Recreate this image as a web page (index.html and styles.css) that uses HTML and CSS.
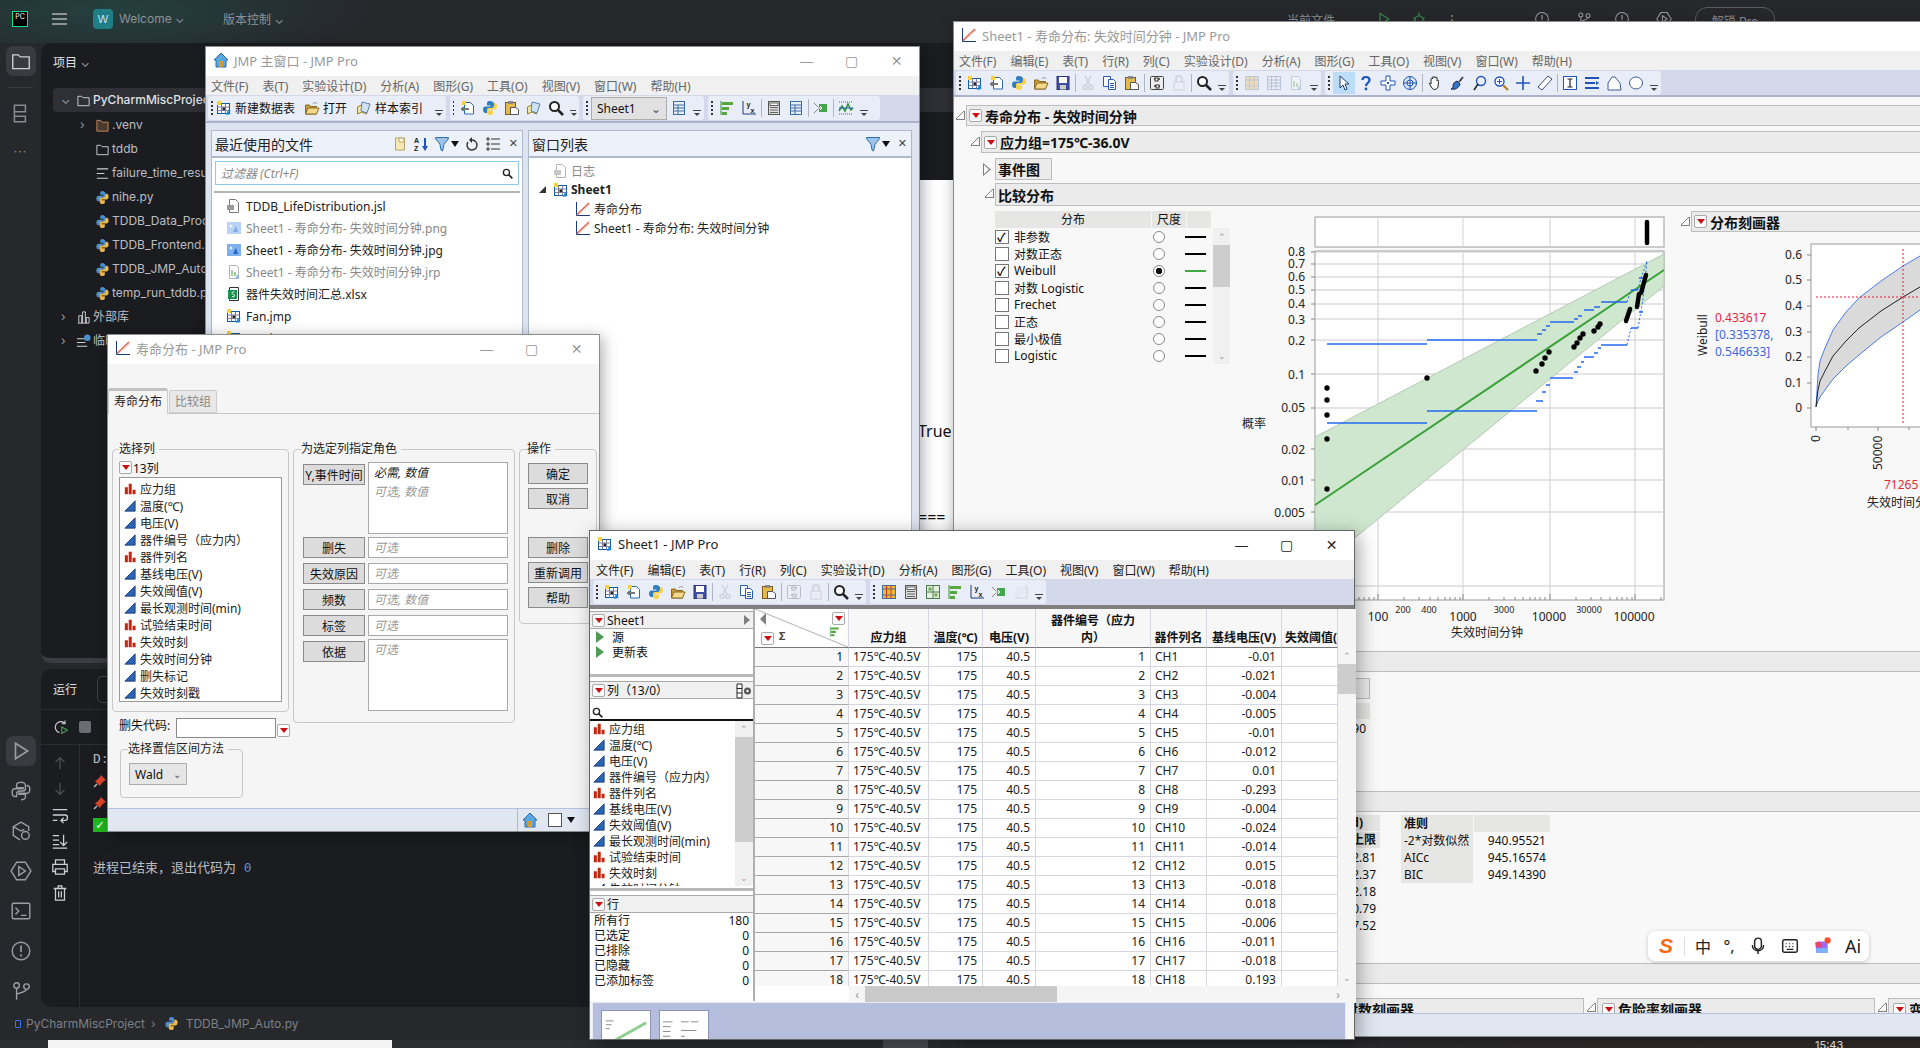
FILE: index.html
```html
<!DOCTYPE html>
<html lang="zh-CN">
  <head>
    <meta charset="UTF-8" />
    <title>JMP Pro</title>
    <link rel="stylesheet" href="styles.css">
  </head>
  <body>
    <svg class="sprite" xmlns="http://www.w3.org/2000/svg">
      <symbol id="i-table" viewBox="0 0 16 16"><rect x="1.5" y="3.5" width="12" height="10" fill="#fff" stroke="#0b5aa8"/><path d="M1.5 7h12M1.5 10.5h12M5.5 3.5v10M9.5 3.5v10" stroke="#7d7f9f" fill="none"/><rect x="1" y="1" width="4" height="4" fill="#f6d33c"/><rect x="6.5" y="7.5" width="2.5" height="2.5" fill="#222"/><path d="M10 15l5-1-2-1 2-3-2 1-1-1z" fill="#1e8ad6"/></symbol>
      <symbol id="i-script" viewBox="0 0 16 16"><path d="M4.500 2.500h6l3 3v8.500h-9z" fill="#fff" stroke="#2b6ca8"/><rect x="2" y="1" width="4" height="4" fill="#f6d33c"/><path d="M1 9h8M3 7v4" stroke="#777" stroke-width="2" fill="none"/></symbol>
      <symbol id="i-py" viewBox="0 0 16 16"><path d="M8 1C5 1 5 2.500 5 4v1.500h3.500V6.500H3.500C2 6.500 1 7.500 1 9.500s1 3.500 2.500 3.500H5V11c0-1.500 1-2.500 2.500-2.500h3C12 8.500 12 7.500 12 6.500V4c0-2-2-3-4-3z" fill="#2f7ec0"/><path d="M8 15c3 0 3-1.500 3-3v-1.500H7.500V9.500h5c1.500 0 2.500-1 2.500-3s-1-3.500-2.500-3.500H12v2c0 1.500-1 3-2.500 3h-3C5 8.500 5 9.500 5 10.500V12c0 2 1 3 3 3z" fill="#f7d24a"/></symbol>
      <symbol id="i-open" viewBox="0 0 16 16"><path d="M1.500 5h4l1 1.500h6V14h-11z" fill="#c99a3e" stroke="#8a6a24"/><path d="M1.500 14l2.500-6h11l-2.500 6z" fill="#f4d98a" stroke="#8a6a24"/><path d="M9 4c1-2 3-2 4 0" fill="none" stroke="#888"/></symbol>
      <symbol id="i-save" viewBox="0 0 16 16"><rect x="2" y="1.500" width="12" height="13" fill="#3f4fa6" stroke="#2b3678"/><rect x="4" y="2" width="8" height="6" fill="#fff"/><rect x="5" y="10" width="6" height="4.500" fill="#ccc"/></symbol>
      <symbol id="i-cut" viewBox="0 0 16 16"><path d="M5 1l5 9M11 1L6 10" stroke="#889" stroke-width="1.500" fill="none"/><circle cx="5" cy="12.500" r="2" fill="none" stroke="#889" stroke-width="1.500"/><circle cx="11" cy="12.500" r="2" fill="none" stroke="#889" stroke-width="1.500"/></symbol>
      <symbol id="i-copy" viewBox="0 0 16 16"><path d="M1.500 1.500h7v10h-7z" fill="#fff" stroke="#2d5fa8"/><path d="M6.500 4.500h5l2 2v8h-7z" fill="#fff" stroke="#2d5fa8"/><path d="M8 8.500h4M8 10.500h4M8 12.500h4" stroke="#2d5fa8"/></symbol>
      <symbol id="i-paste" viewBox="0 0 16 16"><rect x="1.500" y="2.500" width="10" height="12" fill="#e5b94a" stroke="#7e5d1a"/><rect x="4" y="1" width="5" height="3" fill="#888"/><path d="M6.500 7.500h5l3 2v5h-8z" fill="#fff" stroke="#555"/></symbol>
      <symbol id="i-cols" viewBox="0 0 16 16"><rect x="1.500" y="1.500" width="13" height="13" rx="1" fill="#eee" stroke="#444"/><path d="M5 4h6M5 11h6" stroke="#333" stroke-width="1.500"/><rect x="6" y="3" width="3" height="3" fill="#fff" stroke="#333"/><rect x="7" y="10" width="3" height="3" fill="#fff" stroke="#333"/></symbol>
      <symbol id="i-lock" viewBox="0 0 16 16"><rect x="3" y="7" width="10" height="8" fill="#f3f3f3" stroke="#888"/><path d="M5 7V4a3 3 0 0 1 6 0v3" fill="none" stroke="#888" stroke-width="1.500"/></symbol>
      <symbol id="i-find" viewBox="0 0 16 16"><circle cx="6.500" cy="6.500" r="4.500" fill="#fff" stroke="#222" stroke-width="2"/><path d="M10 10l5 5" stroke="#222" stroke-width="2.500"/></symbol>
      <symbol id="i-idx" viewBox="0 0 16 16"><path d="M1.500 7l4-2 5 2v7l-5-2-4 2z" fill="#f7e8a4" stroke="#9a7b2d"/><path d="M6 2l8 2-3 9-6-2z" fill="#cfe2f5" stroke="#5d83ad"/></symbol>
      <symbol id="i-xtab" viewBox="0 0 16 16"><rect x="1.500" y="1.500" width="13" height="13" fill="#eee" stroke="#3b5b8c"/><path d="M1.500 5h13M1.500 8h13M1.500 11h13M5.500 1.500v13M10 1.500v13" stroke="#3b5b8c" fill="none"/></symbol>
      <symbol id="i-fit" viewBox="0 0 16 16"><path d="M2 1v13h13" fill="none" stroke="#1c3a78"/><text x="5.500" y="6.500" class="mini-sym">y</text><text x="9.500" y="12.500" class="mini-sym">x</text></symbol>
      <symbol id="i-bars" viewBox="0 0 16 16"><path d="M2 1v14" stroke="#2f8f3a"/><path d="M3 2h11v3H3zM3 7h7v3H3zM3 12h5v3H3z" fill="#57a640"/></symbol>
      <symbol id="i-calc" viewBox="0 0 16 16"><rect x="2.500" y="1.500" width="11" height="13" fill="#ddd" stroke="#555"/><rect x="4" y="3" width="8" height="2.500" fill="#fff" stroke="#666"/><path d="M4 7.500h8M4 10h8M4 12.500h8" stroke="#666"/></symbol>
      <symbol id="i-tabul" viewBox="0 0 16 16"><rect x="2.500" y="1.500" width="11" height="13" fill="#e8eef7" stroke="#3b6ea8"/><path d="M2.500 5h11M2.500 8h11M2.500 11h11M7 5v9" stroke="#3b6ea8"/></symbol>
      <symbol id="i-move" viewBox="0 0 16 16"><path d="M1 3l5 5-5 5" fill="none" stroke="#7a8a7a"/><path d="M6 4h8v8H6z" fill="#43a54b"/><path d="M3 8h6M7 6l2 2-2 2" stroke="#fff" fill="none"/></symbol>
      <symbol id="i-wave" viewBox="0 0 16 16"><path d="M1 2h14M1 14h14" stroke="#d33" stroke-dasharray="1 1"/><path d="M1 11l3-5 3 5 3-7 3 6 2-2" fill="none" stroke="#2f8f3a" stroke-width="1.500"/><path d="M1 8h14" stroke="#2462b8"/></symbol>
      <symbol id="i-build" viewBox="0 0 16 16"><path d="M2 14L14 2M2 14h12V2" fill="none" stroke="#8a8"/><rect x="3" y="3" width="7" height="7" fill="#dde"/></symbol>
      <symbol id="i-tbl2" viewBox="0 0 16 16"><rect x="1.500" y="1.500" width="13" height="13" fill="#f1b92f" stroke="#3b6ea8"/><path d="M1.500 5h13M1.500 11h13" stroke="#3b6ea8"/><path d="M5.500 1.500v13M10 1.500v13" stroke="#c33"/></symbol>
      <symbol id="i-tbl3" viewBox="0 0 16 16"><rect x="1.500" y="1.500" width="13" height="13" fill="#e5f0e3" stroke="#4d7a4d"/><path d="M8 1.500v13M1.500 8h13" stroke="#4d7a4d"/><rect x="3.500" y="3.500" width="3" height="3" fill="#6aa84f"/><rect x="9.500" y="9.500" width="3" height="3" fill="#6aa84f"/></symbol>
      <symbol id="i-cursor" viewBox="0 0 16 16"><path d="M4 1v12l3-3 2 5 2-1-2-5h4z" fill="#fff" stroke="#1c3a78"/></symbol>
      <symbol id="i-help" viewBox="0 0 16 16"><path d="M4.500 5c0-4 7-4 7 0 0 3-3.500 3-3.500 6" fill="none" stroke="#1f55b8" stroke-width="2.200"/><circle cx="8" cy="14" r="1.400" fill="#1f55b8"/></symbol>
      <symbol id="i-cross" viewBox="0 0 16 16"><path d="M6 1h4v5h5v4h-5v5H6v-5H1V6h5z" fill="#fff" stroke="#1f55b8"/><rect x="7" y="7" width="2" height="2" fill="#1f55b8"/></symbol>
      <symbol id="i-target" viewBox="0 0 16 16"><circle cx="8" cy="8" r="6.500" fill="#d5e4f7" stroke="#1f55b8"/><circle cx="8" cy="8" r="3" fill="#fff" stroke="#1f55b8"/><path d="M8 1v14M1 8h14" stroke="#1f55b8"/></symbol>
      <symbol id="i-hand" viewBox="0 0 16 16"><path d="M4 9V4c0-1 1.500-1 1.500 0V2.500c0-1 1.500-1 1.500 0 0-1 1.500-1 1.500 0V3c0-1 1.500-1 1.500 0v3c.5-1 2-1 1.500.5L11 12c-1 3-5 3-6 1L2.500 9c-.5-1 1-1.500 1.500 0z" fill="#fff" stroke="#222"/></symbol>
      <symbol id="i-brush" viewBox="0 0 16 16"><path d="M8 6l3 3c-1 4-5 6-9 5 2-1 2-2 2-3 0-3 2-4 4-5z" fill="#3475c8" stroke="#224"/><path d="M10 7l4-5" stroke="#444" stroke-width="2"/></symbol>
      <symbol id="i-lasso" viewBox="0 0 16 16"><circle cx="10" cy="6" r="4.500" fill="none" stroke="#1f55b8" stroke-width="1.400"/><path d="M7 9l-4 6" stroke="#222" stroke-width="1.500"/></symbol>
      <symbol id="i-zoom" viewBox="0 0 16 16"><circle cx="6.500" cy="6.500" r="4.500" fill="#fff" stroke="#1f55b8" stroke-width="1.400"/><path d="M6.500 4v5M4 6.500h5" stroke="#1f55b8"/><path d="M10 10l5 5" stroke="#b0802a" stroke-width="2.200"/></symbol>
      <symbol id="i-plus" viewBox="0 0 16 16"><path d="M8 1v14M1 8h14" stroke="#1f55b8" stroke-width="1.600"/></symbol>
      <symbol id="i-ruler" viewBox="0 0 16 16"><path d="M11 1l4 3-10 11-4-3z" fill="#fff" stroke="#3a4f7a"/></symbol>
      <symbol id="i-ibox" viewBox="0 0 16 16"><rect x="1.500" y="1.500" width="13" height="13" fill="#fff" stroke="#1f55b8"/><path d="M5.500 4h5M8 4v8M5.500 12h5" stroke="#222" stroke-width="1.200"/></symbol>
      <symbol id="i-rows" viewBox="0 0 16 16"><path d="M1 3h14M1 8h10M1 13h14" stroke="#1f55b8" stroke-width="2"/><path d="M12 6l3 2-3 2z" fill="#1f55b8"/></symbol>
      <symbol id="i-poly" viewBox="0 0 16 16"><path d="M2 15V8l4-6h3l5 6 1 7z" fill="#fff" stroke="#3a5f9a"/></symbol>
      <symbol id="i-oval" viewBox="0 0 16 16"><ellipse cx="8" cy="8" rx="6.500" ry="6" fill="#fff" stroke="#3a5f9a"/></symbol>
      <symbol id="i-nom" viewBox="0 0 14 14"><path d="M1 5h3.500v8H1zM5.500 1H9v12H5.500zM10 8h3.500v5H10z" fill="#c8250c"/></symbol>
      <symbol id="i-cont" viewBox="0 0 14 14"><path d="M13 1v12H1z" fill="#2d64b4" stroke="#173a7c"/></symbol>
      <symbol id="i-home" viewBox="0 0 16 16"><path d="M8 1L1 8h2v7h10V8h2z" fill="#5aa7e0" stroke="#2a6ca8"/><rect x="6" y="9" width="4" height="6" fill="#d69a2d"/></symbol>
      <symbol id="i-funnel" viewBox="0 0 16 16"><path d="M1.500 1.500h13c0 3-4 5-4.500 7L8.500 15 7 14l-1-5.500c-.5-2-4.500-4-4.500-7z" fill="#9bc4e8" stroke="#2b6ca8"/></symbol>
      <symbol id="i-doc" viewBox="0 0 16 16"><path d="M3.500 1.500h6l3 3v10h-9z" fill="#fff" stroke="#777"/><path d="M1 7h7v5H1z" fill="#999"/></symbol>
      <symbol id="i-pic" viewBox="0 0 16 16"><rect x="1" y="2" width="14" height="12" fill="#7fb0ee"/><path d="M7 12l3-6 2 6z" fill="#1b66c9"/><circle cx="5" cy="6" r="1.500" fill="#dfeeff"/></symbol>
      <symbol id="i-jrp" viewBox="0 0 16 16"><path d="M3.500 1.500h7l2 2v11h-9z" fill="#fff" stroke="#777"/><path d="M5 6h2v6H5zM8 8h2v4H8z" fill="#57a640"/><path d="M9 15l5-1-2-1 1-3-2 1z" fill="#1e8ad6"/></symbol>
      <symbol id="i-xlsx" viewBox="0 0 16 16"><path d="M3.500 1.500h9v13h-9z" fill="#fff" stroke="#333"/><rect x="2" y="4" width="9" height="9" fill="#13934b"/><path d="M8.500 6c-3-1-3 2-1 2.500s1.500 3-1.500 2" fill="none" stroke="#fff"/></symbol>
      <symbol id="i-report" viewBox="0 0 16 16"><path d="M1.500 1v13.500H15" fill="none" stroke="#1c3a78"/><path d="M2 13.500L14 2" stroke="#e06a55" stroke-width="1.600"/><path d="M3 14L15 3" stroke="#f3bdb0"/></symbol>
      <symbol id="i-filter-f" viewBox="0 0 16 16"><path d="M3.500 2h9v12h-9z" fill="#f7e8b4" stroke="#b9a36e"/><path d="M7 2h5v4H7z" fill="#fff8dc" stroke="#b9a36e"/></symbol>
      <symbol id="i-sort" viewBox="0 0 16 16"><text x="1" y="7" class="mini-sym">A</text><text x="1" y="15" class="mini-sym">Z</text><path d="M12 2v10" stroke="#1f55b8" stroke-width="2"/><path d="M9 10l3 5 3-5z" fill="#1f55b8"/></symbol>
      <symbol id="i-redo" viewBox="0 0 16 16"><path d="M8 4a5 5 0 1 1-4 2" fill="none" stroke="#333" stroke-width="1.400"/><path d="M8 1v6L5 4z" fill="#333"/></symbol>
      <symbol id="i-listv" viewBox="0 0 16 16"><path d="M6 3h9M6 8h9M6 13h9" stroke="#333" stroke-width="1.200"/><path d="M2 2h2v2H2zM2 7h2v2H2zM2 12h2v2H2z" fill="#fff" stroke="#333"/></symbol>
      <symbol id="i-colset" viewBox="0 0 16 16"><path d="M1 1h5v14H1z" fill="#fff" stroke="#222"/><path d="M1 5.500h5M1 10h5" stroke="#222"/><circle cx="11.500" cy="8" r="3.500" fill="#555"/><circle cx="11.500" cy="8" r="1.200" fill="#fff"/></symbol>

      <symbol id="d-folder" viewBox="0 0 16 16"><path d="M2 3.500h4l1.500 1.500h6.500v8.500H2z" fill="none" stroke="#ced0d6"/></symbol>
      <symbol id="d-folder-o" viewBox="0 0 16 16"><path d="M2 2.500h4l1.500 2H14v9.500H2z" fill="#4a3a2e" stroke="#c68a5c"/></symbol>
      <symbol id="d-py" viewBox="0 0 16 16"><path d="M8 1C5.500 1 5.500 2.500 5.500 4v1H9v1H3.500C2 6 1.500 7.500 1.500 9s.5 3 2 3H5v-1.500C5 9 6 8 7.500 8h2C11 8 11 7 11 6V3.500C11 2 9.500 1 8 1z" fill="#4b8fd1"/><path d="M8 15c2.500 0 2.500-1.500 2.500-3v-1H7v-1h5.500c1.500 0 2-1.500 2-3s-.5-3-2-3H11v1.500C11 7 10 8 8.500 8h-2C5 8 5 9 5 10v2.500C5 14 6.500 15 8 15z" fill="#eeb94a"/></symbol>
      <symbol id="d-text" viewBox="0 0 16 16"><path d="M2 3h12M2 8h8M2 13h12" stroke="#ced0d6" stroke-width="1.200"/></symbol>
      <symbol id="d-lib" viewBox="0 0 16 16"><path d="M2 14h12M3 14V6h3v8M7 14V2h3v12M11 14V8h3v6" fill="none" stroke="#ced0d6"/></symbol>
      <symbol id="d-temp" viewBox="0 0 16 16"><path d="M1 5h11M1 9h9M1 13h11" stroke="#ced0d6" stroke-width="1.200"/><circle cx="12" cy="4" r="3.500" fill="#4b8fd1"/></symbol>
      <symbol id="d-struct" viewBox="0 0 20 20"><path d="M4 2h10v6H4zM4 8v9h10v-5H4" fill="none" stroke="#868a91" stroke-width="1.400"/></symbol>
      <symbol id="d-run" viewBox="0 0 20 20"><path d="M5 3l11 7-11 7z" fill="none" stroke="#9a9da4" stroke-width="1.500"/></symbol>
      <symbol id="d-run-g" viewBox="0 0 20 20"><path d="M5 3l11 7-11 7z" fill="none" stroke="#3c8f4b" stroke-width="1.500"/></symbol>
      <symbol id="d-bug" viewBox="0 0 20 20"><ellipse cx="10" cy="12" rx="5" ry="6" fill="none" stroke="#3c8f4b" stroke-width="1.500"/><path d="M10 6V2M3 8l3 2M17 8l-3 2M2 13h3M15 13h3" stroke="#3c8f4b" stroke-width="1.500"/></symbol>
      <symbol id="d-rerun" viewBox="0 0 20 20"><path d="M15 5.500A7 7 0 1 0 8 17" fill="none" stroke="#ced0d6" stroke-width="1.400"/><path d="M15 2v4h-4" fill="none" stroke="#ced0d6" stroke-width="1.400"/><path d="M11 10l7 4-7 4z" fill="none" stroke="#4b9f5a" stroke-width="1.400"/></symbol>
      <symbol id="d-up" viewBox="0 0 20 20"><path d="M10 17V4M5 9l5-5 5 5" fill="none" stroke="#4f5256" stroke-width="1.400"/></symbol>
      <symbol id="d-down" viewBox="0 0 20 20"><path d="M10 3v13M5 11l5 5 5-5" fill="none" stroke="#4f5256" stroke-width="1.400"/></symbol>
      <symbol id="d-wrap" viewBox="0 0 20 20"><path d="M2 4h16M2 10h14c3 0 3 6 0 6h-4M14 13l-3 3 3 3M2 16h5" fill="none" stroke="#ced0d6" stroke-width="1.400"/></symbol>
      <symbol id="d-end" viewBox="0 0 20 20"><path d="M2 4h7M2 9h7M2 14h7M14 3v12M10 11l4 4 4-4M2 18h16" fill="none" stroke="#ced0d6" stroke-width="1.400"/></symbol>
      <symbol id="d-print" viewBox="0 0 20 20"><path d="M5 7V2h10v5M5 15H2V7h16v8h-3M5 12h10v6H5z" fill="none" stroke="#ced0d6" stroke-width="1.400"/></symbol>
      <symbol id="d-trash" viewBox="0 0 20 20"><path d="M3 5h14M8 5V2h4v3M5 5v13h10V5M8.500 8v7M11.500 8v7" fill="none" stroke="#ced0d6" stroke-width="1.400"/></symbol>
      <symbol id="d-pin" viewBox="0 0 14 14"><path d="M8 1l5 5-2 1-3 3-1 2-5-5 2-1 3-3z" fill="#e2452a"/><path d="M4 10l-3 3" stroke="#bbb" stroke-width="1.400"/></symbol>
      <symbol id="d-pyo" viewBox="0 0 20 20"><path d="M10 2c-5 0-4 3-4 5h6v1H4c-2 0-2 2-2 4s1 3 3 3h1v-2c0-2 1-3 3-3h3c2 0 2-1 2-2V5c0-2-2-3-4-3zM10 18c5 0 4-3 4-5H8v-1h8c2 0 2-2 2-4s-1-3-3-3" fill="none" stroke="#9a9da4" stroke-width="1.300"/></symbol>
      <symbol id="d-pkg" viewBox="0 0 20 20"><path d="M10 2l7 4v4M10 2L3 6v8l6 4M3 6l7 4 3-1.500" fill="none" stroke="#9a9da4" stroke-width="1.300"/><circle cx="14" cy="14" r="3.500" fill="none" stroke="#9a9da4" stroke-width="1.300"/></symbol>
      <symbol id="d-svc" viewBox="0 0 20 20"><path d="M6 2h8l5 8-5 8H6l-5-8z" fill="none" stroke="#9a9da4" stroke-width="1.300"/><path d="M8 6l6 4-6 4z" fill="none" stroke="#9a9da4" stroke-width="1.300"/></symbol>
      <symbol id="d-term" viewBox="0 0 20 20"><rect x="2" y="3" width="16" height="14" rx="1" fill="none" stroke="#9a9da4" stroke-width="1.300"/><path d="M5 7l3 3-3 3M10 14h5" fill="none" stroke="#9a9da4" stroke-width="1.300"/></symbol>
      <symbol id="d-warn" viewBox="0 0 20 20"><circle cx="10" cy="10" r="8" fill="none" stroke="#9a9da4" stroke-width="1.300"/><path d="M10 5v6M10 13v2" stroke="#9a9da4" stroke-width="1.500"/></symbol>
      <symbol id="d-git" viewBox="0 0 20 20"><circle cx="6" cy="5" r="2.500" fill="none" stroke="#9a9da4" stroke-width="1.300"/><circle cx="15" cy="6" r="2.500" fill="none" stroke="#9a9da4" stroke-width="1.300"/><path d="M6 7.500V18M15 8.500c0 3-9 3-9 5" fill="none" stroke="#9a9da4" stroke-width="1.300"/></symbol>
    </svg>

    <!-- PyCharm behind everything -->
    <div class="ide">
      <div class="ide-top">
        <span class="pc-logo">PC</span>
        <span class="burger"></span>
        <span class="proj-badge">W</span>
        <span class="ide-top-txt w-welcome">Welcome ⌄</span>
        <span class="ide-top-txt">版本控制 ⌄</span>
        <div class="ide-top-right">
          <span class="ide-top-txt w-file">当前文件 ⌄</span>
          <svg class="tb-ico"><use href="#d-run-g"/></svg>
          <svg class="tb-ico"><use href="#d-bug"/></svg>
          <span class="ide-top-txt w-dots">⋮</span>
          <svg class="tb-ico w-gap"><use href="#d-warn"/></svg>
          <svg class="tb-ico w-m7"><use href="#d-git"/></svg>
          <svg class="tb-ico w-m3"><use href="#d-warn"/></svg>
          <svg class="tb-ico w-m7"><use href="#d-svc"/></svg>
          <span class="unlock">解锁 Pro</span>
          <span class="os-ctl os-first">—</span>
          <span class="os-ctl">▢</span>
          <span class="os-ctl">✕</span>
        </div>
      </div>
      <div class="ide-main">
        <div class="activity">
          <div class="act-top">
            <span class="act-btn act-on"><svg class="act-ico"><use href="#d-folder"/></svg></span>
            <span class="act-rule"></span>
            <span class="act-btn"><svg class="act-ico"><use href="#d-struct"/></svg></span>
            <span class="act-more">···</span>
          </div>
          <div class="act-low">
            <span class="act-btn act-on"><svg class="act-ico"><use href="#d-run"/></svg></span>
            <span class="act-btn"><svg class="act-ico"><use href="#d-pyo"/></svg></span>
            <span class="act-btn"><svg class="act-ico"><use href="#d-pkg"/></svg></span>
            <span class="act-btn"><svg class="act-ico"><use href="#d-svc"/></svg></span>
            <span class="act-btn"><svg class="act-ico"><use href="#d-term"/></svg></span>
            <span class="act-btn"><svg class="act-ico"><use href="#d-warn"/></svg></span>
            <span class="act-btn"><svg class="act-ico"><use href="#d-git"/></svg></span>
          </div>
        </div>
        <div class="panels">
          <div class="project">
            <div class="proj-title">项目 <span class="chev">⌄</span></div>
            <ul class="tree">
              <li class="sel lv1"><span class="chev">⌄</span><svg class="tree-ico"><use href="#d-folder"/></svg><b>PyCharmMiscProject</b></li>
              <li class="lv2"><span class="chev">›</span><svg class="tree-ico"><use href="#d-folder-o"/></svg>.venv</li>
              <li class="lv2"><span class="chev"></span><svg class="tree-ico"><use href="#d-folder"/></svg>tddb</li>
              <li class="lv2"><span class="chev"></span><svg class="tree-ico"><use href="#d-text"/></svg>failure_time_results.txt</li>
              <li class="lv2"><span class="chev"></span><svg class="tree-ico"><use href="#d-py"/></svg>nihe.py</li>
              <li class="lv2"><span class="chev"></span><svg class="tree-ico"><use href="#d-py"/></svg>TDDB_Data_Processor.py</li>
              <li class="lv2"><span class="chev"></span><svg class="tree-ico"><use href="#d-py"/></svg>TDDB_Frontend.py</li>
              <li class="lv2"><span class="chev"></span><svg class="tree-ico"><use href="#d-py"/></svg>TDDB_JMP_Auto.py</li>
              <li class="lv2"><span class="chev"></span><svg class="tree-ico"><use href="#d-py"/></svg>temp_run_tddb.py</li>
              <li class="lv1"><span class="chev">›</span><svg class="tree-ico"><use href="#d-lib"/></svg>外部库</li>
              <li class="lv1"><span class="chev">›</span><svg class="tree-ico"><use href="#d-temp"/></svg>临时文件和控制台</li>
            </ul>
          </div>
          <div class="run-panel">
            <div class="run-title">运行<span class="run-tabbox"></span></div>
            <div class="run-tools"><svg class="tb-ico"><use href="#d-rerun"/></svg><span class="stop"></span></div>
            <div class="run-body">
              <div class="run-side">
                <svg class="side-ico"><use href="#d-up"/></svg>
                <svg class="side-ico"><use href="#d-down"/></svg>
                <svg class="side-ico"><use href="#d-wrap"/></svg>
                <svg class="side-ico"><use href="#d-end"/></svg>
                <svg class="side-ico"><use href="#d-print"/></svg>
                <svg class="side-ico"><use href="#d-trash"/></svg>
              </div>
              <div class="console">
                <div>D:</div>
                <div class="pin-row"><svg class="pin"><use href="#d-pin"/></svg></div>
                <div class="pin-row"><svg class="pin"><use href="#d-pin"/></svg></div>
                <div class="ok-row"><span class="ok">✓</span></div>
                <div class="exit-line">进程已结束，退出代码为 <span class="zero">0</span></div>
              </div>
            </div>
          </div>
        </div>
      </div>
      <div class="ide-status">
        <span class="crumb-box"></span>PyCharmMiscProject <span class="crumb-sep">›</span>
        <svg class="tree-ico"><use href="#d-py"/></svg>TDDB_JMP_Auto.py
      </div>
      <div class="taskbar">
        <span class="task-white"></span>
        <span class="task-lit"></span>
        <span class="task-time">15:43</span>
      </div>
    </div>

    <!-- some other window peeking between the JMP windows -->
    <div class="win back-win">
      <div class="back-true">True</div>
      <div class="back-eq">===</div>
    </div>

    <!-- JMP home window -->
    <section class="win home-win">
      <header class="win-title">
        <svg class="ico"><use href="#i-home"/></svg><span>JMP 主窗口 - JMP Pro</span>
        <div class="win-ctl"><span>—</span><span>▢</span><span>✕</span></div>
      </header>
      <nav class="menu">
        <span>文件(F)</span><span>表(T)</span><span>实验设计(D)</span><span>分析(A)</span><span>图形(G)</span><span>工具(O)</span><span>视图(V)</span><span>窗口(W)</span><span>帮助(H)</span>
      </nav>
      <div class="toolbar home-tools">
        <div class="tgroup tg-w1">
          <i class="grip"></i>
          <svg class="ico"><use href="#i-table"/></svg><span class="tb-txt">新建数据表</span>
          <svg class="ico ml"><use href="#i-open"/></svg><span class="tb-txt">打开</span>
          <svg class="ico ml"><use href="#i-idx"/></svg><span class="tb-txt">样本索引</span>
          <i class="drop"></i>
        </div>
        <div class="tgroup tg-w2">
          <i class="grip"></i>
          <svg class="ico btn"><use href="#i-script"/></svg><svg class="ico btn"><use href="#i-py"/></svg><svg class="ico btn"><use href="#i-paste"/></svg><svg class="ico btn"><use href="#i-idx"/></svg><svg class="ico btn"><use href="#i-find"/></svg>
          <i class="drop"></i>
        </div>
        <div class="tgroup tg-w3">
          <i class="grip"></i>
          <span class="tb-select">Sheet1<em>⌄</em></span>
          <svg class="ico btn"><use href="#i-tabul"/></svg>
          <i class="drop"></i>
        </div>
        <div class="tgroup tg-w4">
          <i class="grip"></i>
          <svg class="ico btn"><use href="#i-bars"/></svg><svg class="ico btn"><use href="#i-fit"/></svg><i class="sep"></i>
          <svg class="ico btn"><use href="#i-calc"/></svg><svg class="ico btn"><use href="#i-tabul"/></svg><i class="sep"></i>
          <svg class="ico btn"><use href="#i-move"/></svg><i class="sep"></i>
          <svg class="ico btn"><use href="#i-wave"/></svg>
          <i class="drop"></i>
        </div>
      </div>
      <div class="home-panes">
        <div class="pane recent-pane">
          <div class="pane-head">
            <span>最近使用的文件</span>
            <div class="pane-tools">
              <svg class="ico"><use href="#i-filter-f"/></svg><svg class="ico"><use href="#i-sort"/></svg><svg class="ico"><use href="#i-funnel"/></svg><i class="caret"></i><svg class="ico"><use href="#i-redo"/></svg><svg class="ico"><use href="#i-listv"/></svg><span class="x">✕</span>
            </div>
          </div>
          <div class="filter-box"><span>过滤器 (Ctrl+F)</span><svg class="ico-sm"><use href="#i-find"/></svg></div>
          <ul class="recent">
            <li><svg class="ico"><use href="#i-doc"/></svg>TDDB_LifeDistribution.jsl</li>
            <li class="faded"><svg class="ico"><use href="#i-pic"/></svg>Sheet1 - 寿命分布- 失效时间分钟.png</li>
            <li><svg class="ico"><use href="#i-pic"/></svg>Sheet1 - 寿命分布- 失效时间分钟.jpg</li>
            <li class="faded"><svg class="ico"><use href="#i-jrp"/></svg>Sheet1 - 寿命分布- 失效时间分钟.jrp</li>
            <li><svg class="ico"><use href="#i-xlsx"/></svg>器件失效时间汇总.xlsx</li>
            <li><svg class="ico"><use href="#i-table"/></svg>Fan.jmp</li>
            <li><svg class="ico"><use href="#i-table"/></svg>Fan.jmp</li>
          </ul>
        </div>
        <div class="pane winlist-pane">
          <div class="pane-head">
            <span>窗口列表</span>
            <div class="pane-tools"><svg class="ico"><use href="#i-funnel"/></svg><i class="caret"></i><span class="x">✕</span></div>
          </div>
          <ul class="winlist">
            <li class="wl0 faded"><svg class="ico"><use href="#i-doc"/></svg>日志</li>
            <li class="wl0 strong"><i class="tree-tri"></i><svg class="ico"><use href="#i-table"/></svg>Sheet1</li>
            <li class="wl1"><svg class="ico"><use href="#i-report"/></svg>寿命分布</li>
            <li class="wl1"><svg class="ico"><use href="#i-report"/></svg>Sheet1 - 寿命分布: 失效时间分钟</li>
          </ul>
        </div>
      </div>
    </section>

    <!-- report window -->
    <section class="win report-win">
      <header class="win-title">
        <svg class="ico"><use href="#i-report"/></svg><span>Sheet1 - 寿命分布: 失效时间分钟 - JMP Pro</span>
      </header>
      <nav class="menu report-menu">
        <span>文件(F)</span><span>编辑(E)</span><span>表(T)</span><span>行(R)</span><span>列(C)</span><span>实验设计(D)</span><span>分析(A)</span><span>图形(G)</span><span>工具(O)</span><span>视图(V)</span><span>窗口(W)</span><span>帮助(H)</span>
      </nav>
      <div class="toolbar report-tools">
        <div class="tgroup">
          <i class="grip"></i>
          <svg class="ico btn"><use href="#i-table"/></svg><svg class="ico btn"><use href="#i-script"/></svg><svg class="ico btn"><use href="#i-py"/></svg><svg class="ico btn"><use href="#i-open"/></svg><svg class="ico btn"><use href="#i-save"/></svg><i class="sep"></i>
          <svg class="ico btn dim"><use href="#i-cut"/></svg><svg class="ico btn"><use href="#i-copy"/></svg><svg class="ico btn"><use href="#i-paste"/></svg><i class="sep"></i>
          <svg class="ico btn"><use href="#i-cols"/></svg><svg class="ico btn dim"><use href="#i-lock"/></svg><i class="sep"></i>
          <svg class="ico btn"><use href="#i-find"/></svg>
          <i class="drop"></i>
        </div>
        <div class="tgroup">
          <i class="grip"></i>
          <svg class="ico btn dim"><use href="#i-tbl2"/></svg><svg class="ico btn dim"><use href="#i-xtab"/></svg><svg class="ico btn dim"><use href="#i-jrp"/></svg>
          <i class="drop"></i>
        </div>
        <div class="tgroup">
          <i class="grip"></i>
          <span class="btn-on"><svg class="ico"><use href="#i-cursor"/></svg></span><svg class="ico btn"><use href="#i-help"/></svg><svg class="ico btn"><use href="#i-cross"/></svg><svg class="ico btn"><use href="#i-target"/></svg><i class="sep"></i>
          <svg class="ico btn"><use href="#i-hand"/></svg><svg class="ico btn"><use href="#i-brush"/></svg><svg class="ico btn"><use href="#i-lasso"/></svg><svg class="ico btn"><use href="#i-zoom"/></svg><svg class="ico btn"><use href="#i-plus"/></svg><svg class="ico btn"><use href="#i-ruler"/></svg><i class="sep"></i>
          <svg class="ico btn"><use href="#i-ibox"/></svg><svg class="ico btn"><use href="#i-rows"/></svg><svg class="ico btn"><use href="#i-poly"/></svg><svg class="ico btn"><use href="#i-oval"/></svg>
          <i class="drop"></i>
        </div>
      </div>
      <div class="report-body">
        <h3 class="outline o1"><i class="disc"></i><i class="rbtn"></i>寿命分布 - 失效时间分钟</h3>
        <h3 class="outline o2"><i class="disc"></i><i class="rbtn"></i>应力组=175℃-36.0V</h3>
        <h3 class="outline o3"><i class="disc-r"></i>事件图</h3>
        <h3 class="outline o4"><i class="disc"></i>比较分布</h3>
        <div class="compare">
          <div class="dist-wrap">
            <div class="dist-table">
              <div class="dist-head"><span>分布</span><span>尺度</span><span></span></div>
              <div class="dist-row"><i class="chk on"></i><span>非参数</span><i class="radio"></i><i class="swatch"></i></div>
              <div class="dist-row"><i class="chk"></i><span>对数正态</span><i class="radio"></i><i class="swatch"></i></div>
              <div class="dist-row"><i class="chk on"></i><span>Weibull</span><i class="radio on"></i><i class="swatch green"></i></div>
              <div class="dist-row"><i class="chk"></i><span>对数 Logistic</span><i class="radio"></i><i class="swatch"></i></div>
              <div class="dist-row"><i class="chk"></i><span>Frechet</span><i class="radio"></i><i class="swatch"></i></div>
              <div class="dist-row"><i class="chk"></i><span>正态</span><i class="radio"></i><i class="swatch"></i></div>
              <div class="dist-row"><i class="chk"></i><span>最小极值</span><i class="radio"></i><i class="swatch"></i></div>
              <div class="dist-row"><i class="chk"></i><span>Logistic</span><i class="radio"></i><i class="swatch"></i></div>
            </div>
            <div class="dist-scroll"><span>⌃</span><i></i><span class="dn">⌄</span></div>
          </div>
          <div class="plots">
            <svg class="plot-svg" viewBox="1230 210 690 440">
              <!-- strip above the probability plot -->
              <rect class="plot-box" x="1314" y="218" width="349" height="30"/>
              <path class="grid-v" d="M1377 218v30M1462 218v30M1549 218v30M1634 218v30"/>
              <path class="pts-line" d="M1646 223v21"/>
              <!-- probability plot -->
              <rect class="plot-box" x="1314" y="252" width="349" height="349"/>
              <path class="grid-h" d="M1314 253h349M1314 265h349M1314 278h349M1314 291h349M1314 305h349M1314 320h349M1314 341h349M1314 375h349M1314 409h349M1314 450h349M1314 481h349M1314 513h349M1314 587h349"/>
              <path class="grid-v" d="M1377 252v349M1462 252v349M1549 252v349M1634 252v349"/>
              <path class="band-g" d="M1314 438L1663 255V287L1355 538L1314 580Z"/>
              <path class="fit-g" d="M1314 506L1663 271"/>
              <path class="step" d="M1326 345h100M1426 341h110M1536 335h5M1541 331h4M1545 327h4M1549 323h24M1573 320h4M1577 317h4M1583 311h10M1593 308h6M1600 303h26M1630 291h7M1638 279h8M1326 424h100M1426 412h110M1535 402h7M1541 393h4M1545 386h4M1549 379h23M1573 373h4M1576 368h4M1580 363h3M1583 358h10M1593 354h4M1597 349h3M1600 346h26M1630 329h7M1638 313h4"/>
              <path class="step-dot" d="M1626 346L1630 329M1637 329L1642 300L1646 262M1626 303L1630 291M1637 291L1640 279L1646 262"/>
              <g class="pts">
                <circle cx="1326" cy="389" r="2.700"/><circle cx="1326" cy="401" r="2.700"/><circle cx="1326" cy="416" r="2.700"/><circle cx="1326" cy="440" r="2.700"/><circle cx="1326" cy="490" r="2.700"/><circle cx="1426" cy="379" r="2.700"/>
                <circle cx="1535" cy="372" r="2.700"/><circle cx="1541" cy="365" r="2.700"/><circle cx="1544" cy="359" r="2.700"/><circle cx="1548" cy="353" r="2.700"/><circle cx="1573" cy="348" r="2.700"/><circle cx="1576" cy="344" r="2.700"/><circle cx="1579" cy="339" r="2.700"/><circle cx="1582" cy="335" r="2.700"/><circle cx="1593" cy="332" r="2.700"/><circle cx="1597" cy="328" r="2.700"/><circle cx="1599" cy="325" r="2.700"/>
              </g>
              <path class="pts-line" d="M1625 322L1629 310M1636 308L1638 295M1640 294L1645 276"/>
              <g class="ax ax-r">
                <text x="1304" y="257">0.8</text><text x="1304" y="269">0.7</text><text x="1304" y="282">0.6</text><text x="1304" y="295">0.5</text><text x="1304" y="309">0.4</text><text x="1304" y="325">0.3</text><text x="1304" y="346">0.2</text><text x="1304" y="380">0.1</text><text x="1304" y="413">0.05</text><text x="1304" y="455">0.02</text><text x="1304" y="486">0.01</text><text x="1304" y="518">0.005</text>
              </g>
              <text class="ax ax-m" x="1253" y="429">概率</text>
              <path class="tick" d="M1314 253h-4M1314 265h-4M1314 278h-4M1314 291h-4M1314 305h-4M1314 320h-4M1314 341h-4M1314 375h-4M1314 409h-4M1314 450h-4M1314 481h-4M1314 513h-4"/>
              <path class="tick" d="M1358 601v-3M1363 601v-3M1368 601v-3M1373 601v-3M1377 601v-6M1403 601v-3M1418 601v-3M1429 601v-3M1437 601v-3M1444 601v-3M1449 601v-3M1454 601v-3M1459 601v-3M1462 601v-6M1488 601v-3M1503 601v-3M1514 601v-3M1522 601v-3M1529 601v-3M1534 601v-3M1539 601v-3M1544 601v-3M1549 601v-6M1575 601v-3M1590 601v-3M1600 601v-3M1609 601v-3M1616 601v-3M1621 601v-3M1626 601v-3M1631 601v-3M1634 601v-6M1660 601v-3"/>
              <g class="ax ax-m">
                <text x="1377" y="622">100</text><text x="1462" y="622">1000</text><text x="1548" y="622">10000</text><text x="1633" y="622">100000</text>
                <text class="ax-sm" x="1402" y="614">200</text><text class="ax-sm" x="1428" y="614">400</text><text class="ax-sm" x="1503" y="614">3000</text><text class="ax-sm" x="1588" y="614">30000</text>
                <text x="1486" y="638">失效时间分钟</text>
              </g>
              <!-- distribution profiler -->
              <rect class="plot-box" x="1810" y="245" width="120" height="183"/>
              <path class="band-k" d="M1815 408L1817 376L1819 362L1824 349L1832 331L1845 313L1858 299L1880 282L1902 267L1919 257V311L1902 323L1880 338L1858 356L1845 367L1832 380L1824 391L1819 398L1817 402Z"/>
              <path class="edge-b" d="M1815 408L1817 376L1819 362L1824 349L1832 331L1845 313L1858 299L1880 282L1902 267L1919 257M1815 408L1817 402L1819 398L1824 391L1832 380L1845 367L1858 356L1880 338L1902 323L1919 311"/>
              <path class="edge-k" d="M1815 408L1817 391L1819 382L1824 372L1832 357L1845 342L1858 329L1880 312L1902 298L1919 288"/>
              <path class="cross-r" d="M1902 250V425M1815 298H1920"/>
              <path class="tick" d="M1810 256h-4M1810 281h-4M1810 307h-4M1810 333h-4M1810 358h-4M1810 384h-4M1810 409h-4M1815 428v4M1847 428v3M1877 428v4M1908 428v3"/>
              <g class="ax ax-r">
                <text x="1801" y="260">0.6</text><text x="1801" y="285">0.5</text><text x="1801" y="311">0.4</text><text x="1801" y="337">0.3</text><text x="1801" y="362">0.2</text><text x="1801" y="388">0.1</text><text x="1801" y="413">0</text>
              </g>
              <text class="ax" transform="translate(1819 443) rotate(-90)">0</text>
              <text class="ax" transform="translate(1881 471) rotate(-90)">50000</text>
              <text class="ax ax-m" transform="translate(1706 336) rotate(-90)">Weibull</text>
              <text class="ax val-r" x="1714" y="323">0.433617</text>
              <text class="ax val-b" x="1714" y="340">[0.335378,</text>
              <text class="ax val-b" x="1714" y="357">0.546633]</text>
              <text class="ax val-r" x="1883" y="490">71265</text>
              <text class="ax" x="1866" y="508">失效时间分钟</text>
            </svg>
            <h3 class="outline o-prof"><i class="disc"></i><i class="rbtn"></i>分布刻画器</h3>
          </div>
        </div>
        <div class="band b-a"></div>
        <div class="param-a">
          <div class="pa-box"></div>
          <div class="pa-head">c</div>
          <div class="pa-val">190</div>
        </div>
        <div class="band b-b"></div>
        <div class="stats">
          <div class="st-col">
            <div class="st-head">(d)</div>
            <div class="st-head st-up">上限</div>
            <div class="st-num">2.81</div><div class="st-num">2.37</div><div class="st-num">2.18</div><div class="st-num">0.79</div><div class="st-num">7.52</div>
          </div>
          <div class="crit">
            <b>准则</b><b></b>
            <span>-2*对数似然</span><em>940.95521</em>
            <span>AICc</span><em>945.16574</em>
            <span>BIC</span><em>949.14390</em>
          </div>
        </div>
        <div class="band b-c"></div>
        <div class="profilers">
          <h3 class="outline pf1">对数刻画器</h3>
          <i class="disc"></i>
          <h3 class="outline pf2"><i class="rbtn"></i>危险率刻画器</h3>
          <i class="disc"></i>
          <h3 class="outline pf3"><i class="rbtn"></i>变</h3>
        </div>
      </div>
      <footer class="status"></footer>
    </section>

    <!-- launch dialog -->
    <section class="win dialog-win">
      <header class="win-title">
        <svg class="ico"><use href="#i-report"/></svg><span>寿命分布 - JMP Pro</span>
        <div class="win-ctl"><span>—</span><span>▢</span><span>✕</span></div>
      </header>
      <div class="dlg-client">
        <div class="tabs"><span class="tab tab-on">寿命分布</span><span class="tab">比较组</span></div>
        <div class="dlg-grid">
          <div class="dlg-left">
            <fieldset class="gp gp-cols">
              <legend>选择列</legend>
              <div class="col-count"><i class="rbtn"></i>13列</div>
              <ul class="col-list">
                <li><svg class="ty"><use href="#i-nom"/></svg>应力组</li>
                <li><svg class="ty"><use href="#i-cont"/></svg>温度(℃)</li>
                <li><svg class="ty"><use href="#i-cont"/></svg>电压(V)</li>
                <li><svg class="ty"><use href="#i-cont"/></svg>器件编号（应力内）</li>
                <li><svg class="ty"><use href="#i-nom"/></svg>器件列名</li>
                <li><svg class="ty"><use href="#i-cont"/></svg>基线电压(V)</li>
                <li><svg class="ty"><use href="#i-cont"/></svg>失效阈值(V)</li>
                <li><svg class="ty"><use href="#i-cont"/></svg>最长观测时间(min)</li>
                <li><svg class="ty"><use href="#i-nom"/></svg>试验结束时间</li>
                <li><svg class="ty"><use href="#i-nom"/></svg>失效时刻</li>
                <li><svg class="ty"><use href="#i-cont"/></svg>失效时间分钟</li>
                <li><svg class="ty"><use href="#i-cont"/></svg>删失标记</li>
                <li><svg class="ty"><use href="#i-cont"/></svg>失效时刻戳</li>
              </ul>
            </fieldset>
            <div class="censor">
              <label>删失代码:</label><input type="text" class="censor-in" /><i class="rbtn"></i>
            </div>
            <fieldset class="gp gp-ci">
              <legend>选择置信区间方法</legend>
              <span class="wald">Wald<em>⌄</em></span>
            </fieldset>
          </div>
          <fieldset class="gp gp-roles">
            <legend>为选定列指定角色</legend>
            <div class="role r-tall"><button type="button">Y,事件时间</button><div class="role-box tall"><p class="req">必需, 数值</p><p>可选, 数值</p></div></div>
            <div class="role"><button type="button">删失</button><div class="role-box"><p>可选</p></div></div>
            <div class="role"><button type="button">失效原因</button><div class="role-box"><p>可选</p></div></div>
            <div class="role"><button type="button">频数</button><div class="role-box"><p>可选, 数值</p></div></div>
            <div class="role"><button type="button">标签</button><div class="role-box"><p>可选</p></div></div>
            <div class="role r-last"><button type="button">依据</button><div class="role-box tall"><p>可选</p></div></div>
          </fieldset>
          <fieldset class="gp gp-ops">
            <legend>操作</legend>
            <button type="button">确定</button>
            <button type="button">取消</button>
            <button type="button" class="op-gap">删除</button>
            <button type="button">重新调用</button>
            <button type="button">帮助</button>
          </fieldset>
        </div>
      </div>
      <footer class="status dlg-status">
        <span class="st-sep"></span>
        <svg class="ico"><use href="#i-home"/></svg>
        <i class="st-box"></i>
        <i class="caret"></i>
      </footer>
    </section>

    <!-- data table -->
    <section class="win sheet-win">
      <header class="win-title">
        <svg class="ico"><use href="#i-table"/></svg><span>Sheet1 - JMP Pro</span>
        <div class="win-ctl"><span>—</span><span>▢</span><span>✕</span></div>
      </header>
      <nav class="menu sheet-menu">
        <span>文件(F)</span><span>编辑(E)</span><span>表(T)</span><span>行(R)</span><span>列(C)</span><span>实验设计(D)</span><span>分析(A)</span><span>图形(G)</span><span>工具(O)</span><span>视图(V)</span><span>窗口(W)</span><span>帮助(H)</span>
      </nav>
      <div class="toolbar sheet-tools">
        <div class="tgroup">
          <i class="grip"></i>
          <svg class="ico btn"><use href="#i-table"/></svg><svg class="ico btn"><use href="#i-script"/></svg><svg class="ico btn"><use href="#i-py"/></svg><svg class="ico btn"><use href="#i-open"/></svg><svg class="ico btn"><use href="#i-save"/></svg><i class="sep"></i>
          <svg class="ico btn dim"><use href="#i-cut"/></svg><svg class="ico btn"><use href="#i-copy"/></svg><svg class="ico btn"><use href="#i-paste"/></svg><i class="sep"></i>
          <svg class="ico btn dim"><use href="#i-cols"/></svg><svg class="ico btn dim"><use href="#i-lock"/></svg><i class="sep"></i>
          <svg class="ico btn"><use href="#i-find"/></svg>
          <i class="drop"></i>
        </div>
        <div class="tgroup">
          <i class="grip"></i>
          <svg class="ico btn"><use href="#i-tbl2"/></svg><svg class="ico btn"><use href="#i-calc"/></svg><svg class="ico btn"><use href="#i-tbl3"/></svg><svg class="ico btn"><use href="#i-bars"/></svg><svg class="ico btn"><use href="#i-fit"/></svg><svg class="ico btn"><use href="#i-move"/></svg><svg class="ico btn dim"><use href="#i-build"/></svg>
          <i class="drop"></i>
        </div>
      </div>
      <div class="sheet-main">
        <aside class="sheet-side">
          <div class="side-head"><i class="rbtn"></i>Sheet1<i class="disc-r2"></i></div>
          <ul class="side-scripts">
            <li><i class="play"></i>源</li>
            <li><i class="play"></i>更新表</li>
          </ul>
          <div class="side-div"></div>
          <div class="side-head"><i class="rbtn"></i>列（13/0）<svg class="ico colset"><use href="#i-colset"/></svg></div>
          <div class="side-search"><svg class="ico-sm"><use href="#i-find"/></svg></div>
          <div class="side-cols">
            <ul>
              <li><svg class="ty"><use href="#i-nom"/></svg>应力组</li>
              <li><svg class="ty"><use href="#i-cont"/></svg>温度(℃)</li>
              <li><svg class="ty"><use href="#i-cont"/></svg>电压(V)</li>
              <li><svg class="ty"><use href="#i-cont"/></svg>器件编号（应力内）</li>
              <li><svg class="ty"><use href="#i-nom"/></svg>器件列名</li>
              <li><svg class="ty"><use href="#i-cont"/></svg>基线电压(V)</li>
              <li><svg class="ty"><use href="#i-cont"/></svg>失效阈值(V)</li>
              <li><svg class="ty"><use href="#i-cont"/></svg>最长观测时间(min)</li>
              <li><svg class="ty"><use href="#i-nom"/></svg>试验结束时间</li>
              <li><svg class="ty"><use href="#i-nom"/></svg>失效时刻</li>
              <li><svg class="ty"><use href="#i-cont"/></svg>失效时间分钟</li>
            </ul>
            <div class="side-scroll"><span>⌃</span><i></i><span class="dn">⌄</span></div>
          </div>
          <div class="side-div"></div>
          <div class="side-head"><i class="rbtn"></i>行</div>
          <dl class="side-rows">
            <div><dt>所有行</dt><dd>180</dd></div>
            <div><dt>已选定</dt><dd>0</dd></div>
            <div><dt>已排除</dt><dd>0</dd></div>
            <div><dt>已隐藏</dt><dd>0</dd></div>
            <div><dt>已添加标签</dt><dd>0</dd></div>
          </dl>
        </aside>
        <div class="sheet-data">
          <div class="data-top">
            <div class="data-clip">
              <table class="data">
                <colgroup><col class="c0"><col class="c1"><col class="c2"><col class="c3"><col class="c4"><col class="c5"><col class="c6"><col class="c7"></colgroup>
                <thead>
                  <tr>
                    <th class="corner"><i class="disc-l2"></i><i class="rbtn cr1"></i><i class="rbtn cr2"></i><span class="sigma">Σ</span><svg class="ico-sm cr3"><use href="#i-bars"/></svg></th>
                    <th>应力组</th><th>温度(℃)</th><th>电压(V)</th><th>器件编号（应力<br>内）</th><th>器件列名</th><th>基线电压(V)</th><th class="cut">失效阈值(V)</th>
                  </tr>
                </thead>
                <tbody>
                  <tr><td>1</td><td class="l">175℃-40.5V</td><td>175</td><td>40.5</td><td>1</td><td class="l">CH1</td><td>-0.01</td><td></td></tr>
                  <tr><td>2</td><td class="l">175℃-40.5V</td><td>175</td><td>40.5</td><td>2</td><td class="l">CH2</td><td>-0.021</td><td></td></tr>
                  <tr><td>3</td><td class="l">175℃-40.5V</td><td>175</td><td>40.5</td><td>3</td><td class="l">CH3</td><td>-0.004</td><td></td></tr>
                  <tr><td>4</td><td class="l">175℃-40.5V</td><td>175</td><td>40.5</td><td>4</td><td class="l">CH4</td><td>-0.005</td><td></td></tr>
                  <tr><td>5</td><td class="l">175℃-40.5V</td><td>175</td><td>40.5</td><td>5</td><td class="l">CH5</td><td>-0.01</td><td></td></tr>
                  <tr><td>6</td><td class="l">175℃-40.5V</td><td>175</td><td>40.5</td><td>6</td><td class="l">CH6</td><td>-0.012</td><td></td></tr>
                  <tr><td>7</td><td class="l">175℃-40.5V</td><td>175</td><td>40.5</td><td>7</td><td class="l">CH7</td><td>0.01</td><td></td></tr>
                  <tr><td>8</td><td class="l">175℃-40.5V</td><td>175</td><td>40.5</td><td>8</td><td class="l">CH8</td><td>-0.293</td><td></td></tr>
                  <tr><td>9</td><td class="l">175℃-40.5V</td><td>175</td><td>40.5</td><td>9</td><td class="l">CH9</td><td>-0.004</td><td></td></tr>
                  <tr><td>10</td><td class="l">175℃-40.5V</td><td>175</td><td>40.5</td><td>10</td><td class="l">CH10</td><td>-0.024</td><td></td></tr>
                  <tr><td>11</td><td class="l">175℃-40.5V</td><td>175</td><td>40.5</td><td>11</td><td class="l">CH11</td><td>-0.014</td><td></td></tr>
                  <tr><td>12</td><td class="l">175℃-40.5V</td><td>175</td><td>40.5</td><td>12</td><td class="l">CH12</td><td>0.015</td><td></td></tr>
                  <tr><td>13</td><td class="l">175℃-40.5V</td><td>175</td><td>40.5</td><td>13</td><td class="l">CH13</td><td>-0.018</td><td></td></tr>
                  <tr><td>14</td><td class="l">175℃-40.5V</td><td>175</td><td>40.5</td><td>14</td><td class="l">CH14</td><td>0.018</td><td></td></tr>
                  <tr><td>15</td><td class="l">175℃-40.5V</td><td>175</td><td>40.5</td><td>15</td><td class="l">CH15</td><td>-0.006</td><td></td></tr>
                  <tr><td>16</td><td class="l">175℃-40.5V</td><td>175</td><td>40.5</td><td>16</td><td class="l">CH16</td><td>-0.011</td><td></td></tr>
                  <tr><td>17</td><td class="l">175℃-40.5V</td><td>175</td><td>40.5</td><td>17</td><td class="l">CH17</td><td>-0.018</td><td></td></tr>
                  <tr><td>18</td><td class="l">175℃-40.5V</td><td>175</td><td>40.5</td><td>18</td><td class="l">CH18</td><td>0.193</td><td></td></tr>
                </tbody>
              </table>
            </div>
            <div class="v-scroll"><span>⌃</span><i></i><span class="dn">⌄</span></div>
          </div>
          <div class="h-scroll"><span class="hs-l">‹</span><i></i><span class="hs-r">›</span></div>
        </div>
      </div>
      <div class="thumbs">
        <svg class="thumb" viewBox="0 0 50 27"><path d="M4 4h8M4 8h6M4 12h4" stroke="#888"/><path d="M14 24L46 6" stroke="#8fcf8f" stroke-width="3"/></svg>
        <svg class="thumb" viewBox="0 0 50 27"><path d="M3 5h10M3 10h8M3 15h8M3 20h8M22 5h8M32 5h8M22 14h16M22 20h4" stroke="#888"/></svg>
      </div>
    </section>

    <!-- input method bar -->
    <div class="ime">
      <span class="ime-s">S</span><i class="ime-sep"></i>
      <span class="ime-i ime-zh">中</span>
      <span class="ime-i">°,</span>
      <svg class="ime-svg" viewBox="0 0 16 16"><rect x="5" y="1" width="6" height="10" rx="3" fill="none" stroke="#222" stroke-width="1.300"/><path d="M3 7c0 7 10 7 10 0M8 12v3" fill="none" stroke="#222" stroke-width="1.300"/></svg>
      <svg class="ime-svg" viewBox="0 0 16 16"><rect x="1.500" y="2.500" width="13" height="11" rx="1.500" fill="none" stroke="#222" stroke-width="1.300"/><path d="M4 6h1M7 6h1M10 6h1M4 8.500h1M7 8.500h1M10 8.500h1M5 11h6" stroke="#222"/></svg>
      <svg class="ime-svg" viewBox="0 0 16 16"><path d="M2 5l3-1h5l3 1v9H3z" fill="#9a6bf0"/><path d="M2 5l3-1 3 2v3H3z" fill="#e8476a"/><path d="M3 10h10v4H3z" fill="#79b6f5"/><circle cx="13" cy="3" r="2.800" fill="#f5502c"/></svg>
      <span class="ime-i ime-ai">Ai</span>
    </div>
  </body>
</html>
```

FILE: styles.css
```css
* {
  box-sizing: border-box;
}
html,
body {
  margin: 0;
  height: 100%;
}
body {
  width: 1920px;
  height: 1048px;
  overflow: hidden;
  position: relative;
  background: #26282c;
  font-family: "Noto Sans", "Noto Sans CJK SC", sans-serif;
  font-size: 12px;
  color: #111;
}
ul,
dl,
dd,
p,
h3 {
  margin: 0;
  padding: 0;
  list-style: none;
}
i,
em {
  font-style: normal;
}
.sprite {
  display: none;
}
.mini-sym {
  font: bold 7px "Liberation Sans", sans-serif;
  fill: #222;
}

/* ------ PyCharm ------ */
.ide {
  height: 100%;
  display: flex;
  flex-direction: column;
  font-family: Inter, "Noto Sans CJK SC", sans-serif;
  font-size: 12px;
  color: #bcbec4;
}
.ide-top {
  height: 43px;
  display: flex;
  align-items: center;
  padding: 0 0 6px 12px;
  background: radial-gradient(ellipse 260px 60px at 110px 10px, #24403f, transparent), #26282c;
}
.pc-logo {
  width: 16px;
  height: 16px;
  background: #000;
  border: 1px solid #21d789;
  color: #fff;
  font-size: 7px;
  line-height: 10px;
  text-align: center;
}
.burger {
  width: 15px;
  height: 12px;
  margin-left: 24px;
  border-top: 2px solid #8f9298;
  border-bottom: 2px solid #8f9298;
  position: relative;
}
.burger::after {
  content: "";
  position: absolute;
  left: 0;
  right: 0;
  top: 3px;
  border-top: 2px solid #8f9298;
}
.proj-badge {
  width: 20px;
  height: 20px;
  margin-left: 26px;
  border-radius: 4px;
  background: #1f7f86;
  color: #cde;
  text-align: center;
  line-height: 20px;
  font-size: 11px;
}
.ide-top-txt {
  color: #8f9298;
  margin-left: 6px;
}
.w-welcome {
  width: 98px;
}
.ide-top-right {
  position: absolute;
  left: 1287px;
  right: 0;
  top: 9px;
  height: 20px;
  display: flex;
  align-items: center;
  gap: 19px;
}
.ide-top-right .ide-top-txt {
  margin: 0;
}
.w-file {
  width: 70px;
}
.tb-ico {
  width: 16px;
  height: 16px;
}
.w-gap {
  margin-left: 57px;
}
.w-m7 {
  margin-left: 7px;
}
.w-m3 {
  margin-left: 3px;
}
.unlock {
  width: 80px;
  height: 30px;
  margin-top: 6px;
  margin-left: 4px;
  border: 1px solid #5a5d63;
  border-radius: 12px;
  text-align: center;
  line-height: 28px;
  color: #8f9298;
}
.os-ctl {
  width: 27px;
  text-align: center;
  color: #9a9da4;
  margin-top: 18px;
}
.os-first {
  margin-left: 7px;
}
.ide-main {
  flex: 1;
  min-height: 0;
  display: flex;
}
.activity {
  width: 41px;
  display: flex;
  flex-direction: column;
  align-items: center;
}
.act-top {
  display: flex;
  flex-direction: column;
  align-items: center;
  padding-top: 3px;
  height: 675px;
}
.act-btn {
  width: 30px;
  height: 30px;
  border-radius: 7px;
  display: flex;
  align-items: center;
  justify-content: center;
}
.act-on {
  background: #393b40;
}
.act-ico {
  width: 22px;
  height: 22px;
}
.act-rule {
  width: 24px;
  height: 1px;
  margin: 11px 0;
  background: #393b40;
}
.act-more {
  margin-top: 15px;
  color: #868a91;
  letter-spacing: 1px;
}
.act-low {
  display: flex;
  flex-direction: column;
  gap: 10px;
  margin-top: 18px;
}
.panels {
  flex: 1;
  display: flex;
  flex-direction: column;
  gap: 6px;
}
.project {
  height: 620px;
  background: #1b1c1f;
  border-radius: 10px;
  padding: 8px 0 0 12px;
  border-bottom: 5px solid #3a3d41;
}
.proj-title {
  height: 37px;
  line-height: 24px;
  color: #dfe1e5;
}
.chev {
  display: inline-block;
  width: 15px;
  color: #9a9da4;
  flex: none;
}
.proj-title .chev {
  width: auto;
}
.tree li {
  height: 24px;
  line-height: 24px;
  display: flex;
  align-items: center;
  white-space: nowrap;
}
.tree .sel {
  background: #2e3035;
  border-radius: 4px;
  margin-bottom: 1px;
}
.tree .sel b {
  font-weight: 500;
  color: #dfe1e5;
}
.lv1 {
  padding-left: 8px;
}
.lv2 {
  padding-left: 27px;
}
.tree-ico {
  width: 15px;
  height: 15px;
  margin-right: 2px;
  flex: none;
}
.run-panel {
  flex: 1;
  background: #1b1c1f;
  border-radius: 10px;
  display: flex;
  flex-direction: column;
}
.run-title {
  height: 41px;
  line-height: 42px;
  padding-left: 12px;
  border-bottom: 1px solid #2b2d30;
  color: #dfe1e5;
  display: flex;
}
.run-tabbox {
  width: 30px;
  height: 27px;
  margin: 7px 0 0 20px;
  border: 1px solid #43454a;
  border-radius: 5px;
}
.run-tools {
  height: 35px;
  display: flex;
  align-items: center;
  padding-left: 12px;
  gap: 10px;
  border-bottom: 1px solid #2b2d30;
}
.stop {
  width: 12px;
  height: 12px;
  background: #6a6d72;
  border-radius: 2px;
}
.run-body {
  flex: 1;
  display: flex;
}
.run-side {
  width: 39px;
  border-right: 1px solid #2b2d30;
  display: flex;
  flex-direction: column;
  align-items: center;
  gap: 8px;
  padding-top: 9px;
}
.side-ico {
  width: 18px;
  height: 18px;
}
.console {
  padding: 3px 0 0 13px;
  font-family: "DejaVu Sans Mono", "Noto Sans CJK SC", monospace;
  font-size: 13px;
  line-height: 22px;
}
.pin-row {
  height: 22px;
  display: flex;
  align-items: center;
}
.pin {
  width: 14px;
  height: 14px;
}
.ok-row {
  height: 24px;
}
.ok {
  display: inline-block;
  width: 14px;
  height: 14px;
  line-height: 14px;
  background: #1fb81f;
  color: #fff;
  text-align: center;
}
.exit-line {
  margin-top: 19px;
  color: #bcbec4;
}
.zero {
  color: #5f8fc5;
}
.ide-status {
  height: 33px;
  display: flex;
  align-items: center;
  padding-left: 15px;
  color: #7d8085;
  gap: 5px;
}
.crumb-box {
  width: 6px;
  height: 8px;
  border: 1px solid #3574f0;
  border-radius: 1px;
}
.crumb-sep {
  margin: 0 3px 0 1px;
}
.taskbar {
  height: 8px;
  position: relative;
  background: linear-gradient(90deg, #2b2d31, #2b2d31 60%, #2e2925);
  overflow: hidden;
}
.task-white {
  position: absolute;
  left: 48px;
  width: 344px;
  height: 8px;
  background: #f4f4f4;
}
.task-lit {
  position: absolute;
  left: 883px;
  width: 45px;
  height: 8px;
  background: #4a4d52;
}
.task-time {
  position: absolute;
  left: 1815px;
  top: 0;
  color: #eee;
  font-size: 11px;
  line-height: 10px;
}

/* ------ windows ------ */
.win {
  position: absolute;
  display: flex;
  flex-direction: column;
  background: #f5f5f5;
  border: 1px solid #8d8d8d;
  box-shadow: 2px 3px 14px rgba(0, 0, 0, 0.35);
}
.back-win {
  left: 600px;
  top: 180px;
  width: 353px;
  height: 360px;
  background: #fff;
  border: 0;
  box-shadow: none;
  font-size: 16px;
}
.back-true {
  position: absolute;
  left: 318px;
  top: 240px;
}
.back-eq {
  position: absolute;
  left: 318px;
  top: 326px;
}
.home-win {
  left: 205px;
  top: 46px;
  width: 715px;
  height: 500px;
}
.report-win {
  left: 953px;
  top: 21px;
  width: 980px;
  height: 1016px;
}
.dialog-win {
  left: 107px;
  top: 334px;
  width: 493px;
  height: 498px;
}
.sheet-win {
  left: 589px;
  top: 530px;
  width: 766px;
  height: 510px;
  box-shadow: 4px 4px 18px rgba(0, 0, 0, 0.35);
  border-color: #666;
}
.win-title {
  height: 29px;
  flex: none;
  background: #fff;
  display: flex;
  align-items: center;
  padding: 0 0 3px 7px;
  gap: 5px;
  font-size: 13px;
  color: #999;
  position: relative;
}
.sheet-win .win-title {
  color: #222;
}
.win-ctl {
  position: absolute;
  right: 0;
  top: 0;
  height: 28px;
  display: flex;
}
.win-ctl span {
  width: 45px;
  text-align: center;
  line-height: 28px;
  font-size: 14px;
  font-family: "DejaVu Sans", sans-serif;
}
.ico {
  width: 16px;
  height: 16px;
  flex: none;
}
.ico-sm {
  width: 11px;
  height: 11px;
  flex: none;
}
.menu {
  height: 19px;
  flex: none;
  display: flex;
  gap: 14px;
  align-items: center;
  padding-left: 5px;
  background: #f0f0f0;
  color: #666;
  white-space: nowrap;
}
.report-menu {
  padding-left: 5px;
}
.sheet-menu {
  padding-left: 6px;
  color: #222;
}
.toolbar {
  flex: none;
  height: 27px;
  display: flex;
  gap: 4px;
  padding: 1px 0 0 2px;
  background: #d3d9ea;
  border-bottom: 2px solid #aab3cb;
}
.tgroup {
  height: 24px;
  display: flex;
  align-items: center;
  padding-left: 3px;
  background: #e9edf8;
  border-radius: 3px;
}
.btn {
  width: 22px;
  padding: 0 3px;
}
.btn-on {
  width: 22px;
  height: 22px;
  background: #bcdcf7;
  display: flex;
  align-items: center;
  justify-content: center;
}
.dim {
  opacity: 0.28;
}
.grip {
  width: 2px;
  height: 15px;
  margin-right: 3px;
  background: repeating-linear-gradient(#333 0 2px, transparent 2px 4px);
}
.sep {
  width: 1px;
  height: 18px;
  margin: 0 1px;
  background: #b0b4c2;
}
.drop {
  width: 8px;
  height: 8px;
  margin: 12px 3px 0 3px;
  border-top: 1px solid #444;
  position: relative;
}
.drop::after {
  content: "";
  position: absolute;
  left: 1px;
  top: 2px;
  border: 3px solid transparent;
  border-top-color: #444;
  border-bottom: 0;
}
.tb-txt {
  margin-left: 3px;
  white-space: nowrap;
}
.ml {
  margin-left: 9px;
}

/* ------ JMP home ------ */
.home-tools {
  height: 28px;
}
.tg-w1 {
  width: 238px;
}
.tg-w1 .drop {
  margin-left: auto;
}
.tg-w2 {
  width: 129px;
}
.tg-w3 {
  width: 121px;
}
.tg-w4 {
  width: 172px;
}
.tb-select {
  width: 80px;
  height: 23px;
  padding-left: 5px;
  margin-right: 1px;
  display: flex;
  align-items: center;
  justify-content: space-between;
  background: #e1e1e1;
  border: 1px solid #adadad;
  font-size: 12px;
}
.tb-select em {
  padding-right: 5px;
  color: #555;
}
.home-panes {
  flex: 1;
  display: flex;
  gap: 5px;
  padding: 7px 7px 0 5px;
  background: #dde4f0;
  min-height: 0;
}
.pane {
  background: #fff;
  border: 1px solid #aeb9ce;
  display: flex;
  flex-direction: column;
}
.recent-pane {
  width: 312px;
}
.winlist-pane {
  flex: 1;
}
.pane-head {
  height: 27px;
  flex: none;
  display: flex;
  align-items: center;
  justify-content: space-between;
  padding-left: 3px;
  background: #edf1fa;
  border-bottom: 2px solid #aeb9ce;
  font-size: 14px;
  color: #222;
}
.pane-tools {
  display: flex;
  align-items: center;
  gap: 5px;
  padding-right: 4px;
}
.x {
  font-size: 11px;
  color: #444;
  margin-left: 3px;
  font-family: "DejaVu Sans", sans-serif;
}
.caret {
  display: inline-block;
  margin-left: -4px;
  border: 4px solid transparent;
  border-top: 6px solid #111;
  border-bottom: 0;
}
.filter-box {
  height: 24px;
  flex: none;
  margin: 3px 3px 0;
  padding: 0 5px;
  display: flex;
  align-items: center;
  justify-content: space-between;
  border: 1px solid #8ccbf0;
  color: #888;
  font-style: italic;
}
.recent {
  flex: none;
  margin: 6px 2px 0;
  padding-top: 2px;
  border-top: 2px solid #b5b5b5;
}
.recent li,
.winlist li {
  height: 22px;
  display: flex;
  align-items: center;
  gap: 4px;
  padding-left: 12px;
  white-space: nowrap;
  color: #222;
}
.faded {
  color: #888 !important;
}
.faded .ico {
  opacity: 0.55;
}
.winlist {
  padding-top: 3px;
}
.winlist li {
  height: 19px;
  gap: 2px;
}
.wl0 {
  padding-left: 24px !important;
}
.wl1 {
  padding-left: 46px !important;
  gap: 1px;
}
.wl1 .ico {
  margin-right: 1px;
}
.strong {
  font-weight: 700;
  position: relative;
}
.tree-tri {
  position: absolute;
  left: 10px;
  top: 6px;
  border-left: 7px solid transparent;
  border-bottom: 7px solid #333;
}

/* ------ shared JMP bits ------ */
.rbtn {
  display: inline-block;
  position: relative;
  width: 13px;
  height: 13px;
  border: 1px solid #aaa;
  border-radius: 2px;
  background: #fbfbfb;
  flex: none;
}
.rbtn::after {
  content: "";
  position: absolute;
  left: 2px;
  top: 3px;
  border: 4px solid transparent;
  border-top: 5px solid #cc0d12;
  border-bottom: 0;
}
.outline {
  display: flex;
  align-items: center;
  gap: 3px;
  padding-left: 2px;
  background: #ebebeb;
  border: 1px solid #bdbdbd;
  font-size: 14px;
  font-weight: 700;
  white-space: nowrap;
  position: relative;
}
.disc {
  display: inline-block;
  position: absolute;
  width: 9px;
  height: 9px;
  left: -11px;
  top: 5px;
  border-right: 1px solid #808080;
  border-bottom: 1px solid #808080;
  background: linear-gradient(to top left, #fafafa 0 46%, #808080 46% 54%, transparent 54%);
}
.disc-r {
  position: absolute;
  left: -13px;
  top: 4px;
  width: 8px;
  height: 13px;
  background: #808080;
  clip-path: polygon(0 0, 100% 50%, 0 100%);
}
.disc-r::after {
  content: "";
  position: absolute;
  left: 1px;
  top: 2px;
  width: 5px;
  height: 9px;
  background: #fafafa;
  clip-path: polygon(0 0, 100% 50%, 0 100%);
}
.ty {
  width: 12px;
  height: 12px;
  margin-right: 4px;
  flex: none;
}

/* ------ report ------ */
.report-body {
  flex: 1;
  min-height: 0;
  overflow: hidden;
  padding-top: 8px;
  background: #f8f8f8;
}
.o1 {
  margin-left: 12px;
  height: 21px;
}
.o2 {
  margin: 5px 0 0 27px;
  height: 22px;
}
.o3 {
  margin: 5px 0 0 41px;
  width: 57px;
  height: 22px;
}
.o4 {
  margin: 3px 0 0 41px;
  height: 23px;
}
.compare {
  display: flex;
  height: 442px;
  margin-top: 3px;
}
.dist-wrap {
  width: 277px;
  padding: 2px 0 0 41px;
  display: flex;
  align-items: flex-start;
}
.dist-table {
  width: 216px;
}
.dist-head {
  height: 17px;
  display: grid;
  grid-template-columns: 156px 34px 24px;
  gap: 1px;
  text-align: center;
  background: #f8f8f8;
}
.dist-head span {
  background: #e6e6e4;
  line-height: 17px;
}
.dist-row {
  height: 17px;
  display: grid;
  grid-template-columns: 14px 142px 32px 24px;
  align-items: center;
  column-gap: 0;
}
.dist-row span {
  padding-left: 5px;
}
.chk {
  width: 14px;
  height: 14px;
  background: #fff;
  border: 1px solid #777;
  position: relative;
}
.chk.on::after {
  content: "✓";
  position: absolute;
  left: 1px;
  top: -3px;
  font-size: 12px;
  font-weight: 700;
}
.radio {
  width: 12px;
  height: 12px;
  margin-left: 2px;
  border: 1px solid #888;
  border-radius: 50%;
  background: #fff;
}
.radio.on {
  background: radial-gradient(circle, #111 0 3px, #fff 3.500px);
}
.swatch {
  height: 2px;
  margin: 0 1px 0 2px;
  background: #000;
}
.swatch.green {
  background: #3faa3f;
}
.dist-scroll {
  width: 17px;
  height: 136px;
  margin: 17px 0 0 2px;
  background: #f0f0f0;
  display: flex;
  flex-direction: column;
  text-align: center;
  font-size: 9px;
  color: #999;
  line-height: 17px;
}
.dist-scroll i {
  height: 42px;
  background: #cdcdcd;
}
.dist-scroll .dn {
  margin-top: auto;
}
.plots {
  position: relative;
  flex: none;
  width: 690px;
  height: 440px;
}
.plot-svg {
  display: block;
  width: 690px;
  height: 440px;
}
.plot-box {
  fill: #fff;
  stroke: #9a9a9a;
}
.grid-h {
  stroke: #c9c9c9;
  fill: none;
}
.grid-v {
  stroke: #d0d0d0;
  fill: none;
}
.band-g {
  fill: #cfe7cf;
  stroke: #b5c8b5;
}
.fit-g {
  stroke: #3aa03a;
  stroke-width: 2;
}
.step {
  stroke: #2469f0;
  stroke-width: 1.400;
  fill: none;
}
.step-dot {
  stroke: #2469f0;
  stroke-dasharray: 2 2;
  fill: none;
}
.pts circle {
  fill: #000;
}
.pts-line {
  stroke: #000;
  stroke-width: 4.500;
  stroke-linecap: round;
  fill: none;
}
.tick {
  stroke: #888;
  fill: none;
}
.ax {
  font-family: "Noto Sans", "Noto Sans CJK SC", sans-serif;
  font-size: 12px;
  fill: #222;
}
.ax-r {
  text-anchor: end;
}
.ax-m {
  text-anchor: middle;
}
.ax-sm {
  font-size: 9px;
}
.val-r {
  fill: #e2283c;
}
.val-b {
  fill: #3a66e0;
}
.band-k {
  fill: #dadada;
}
.edge-b {
  stroke: #4c7ce8;
  fill: none;
}
.edge-k {
  stroke: #222;
  fill: none;
}
.cross-r {
  stroke: #d9233a;
  stroke-dasharray: 2 2;
  fill: none;
}
.o-prof {
  position: absolute;
  left: 460px;
  top: 2px;
  width: 240px;
  height: 21px;
}
.band {
  height: 21px;
  background: #ebebeb;
  border-top: 1px solid #bdbdbd;
  border-bottom: 1px solid #bdbdbd;
}
.b-a {
  margin-top: 0;
}
.param-a {
  margin-left: 346px;
  width: 70px;
  height: 119px;
  padding-top: 6px;
}
.pa-box {
  height: 21px;
  border: 1px solid #bdbdbd;
  background: #ebebeb;
}
.pa-head {
  height: 16px;
  margin-top: 4px;
  background: #e6e6e4;
  text-align: right;
  padding-right: 32px;
}
.pa-val {
  text-align: right;
  padding-right: 4px;
  line-height: 20px;
}
.stats {
  display: flex;
  height: 151px;
  margin-left: 346px;
  padding-top: 3px;
  gap: 21px;
}
.st-col {
  width: 80px;
}
.st-head {
  height: 16px;
  line-height: 16px;
  margin-bottom: 1px;
  background: #e6e6e4;
  text-align: right;
  padding-right: 17px;
  font-weight: 700;
}
.st-up {
  padding-right: 4px;
}
.st-num {
  height: 17px;
  line-height: 17px;
  text-align: right;
  padding-right: 4px;
}
.crit {
  width: 149px;
  height: 68px;
  display: grid;
  grid-template-columns: 72px 76px;
  grid-auto-rows: 17px;
  column-gap: 1px;
}
.crit b,
.crit span {
  background: #e6e6e4;
  padding-left: 3px;
  line-height: 17px;
  white-space: nowrap;
}
.crit em {
  text-align: right;
  padding-right: 4px;
  line-height: 17px;
}
.profilers {
  display: flex;
  margin-top: 14px;
  margin-left: 345px;
  position: relative;
}
.profilers .outline {
  height: 22px;
  padding-left: 4px;
  background: #ebebeb;
}
.pf1 {
  width: 285px;
  justify-content: flex-end;
  padding-right: 169px;
}
.pf2 {
  width: 278px;
  margin-left: 4px;
}
.pf3 {
  width: 40px;
  margin-left: 4px;
}
.profilers > .disc {
  position: relative;
  flex: none;
  left: 3px;
  top: 5px;
}
.status {
  height: 23px;
  flex: none;
  background: #e1e7f1;
  border-top: 1px solid #b5c0dc;
}

/* ------ launch dialog ------ */
.dlg-client {
  flex: 1;
  min-height: 0;
  padding-top: 25px;
  background: #f5f5f5;
  display: flex;
  flex-direction: column;
}
.tabs {
  height: 25px;
  display: flex;
  align-items: flex-end;
  border-bottom: 1px solid #c8c8c8;
}
.tab {
  width: 48px;
  height: 23px;
  text-align: center;
  line-height: 22px;
  background: #e8e8e8;
  border: 1px solid #ccc;
  border-radius: 2px 2px 0 0;
  color: #888;
}
.tab-on {
  width: 60px;
  height: 26px;
  margin-bottom: -1px;
  margin-right: 1px;
  background: #f5f5f5;
  border-top: 3px solid #c2c2c2;
  border-bottom: 0;
  color: #222;
}
.dlg-grid {
  display: grid;
  grid-template-columns: 177px 222px 78px;
  column-gap: 4px;
  padding: 28px 0 0 4px;
  align-items: start;
}
.dlg-left {
  display: flex;
  flex-direction: column;
  align-items: flex-start;
}
.gp {
  margin: 0;
  padding: 0;
  min-width: 0;
  border: 1px solid #c8c8c8;
  border-radius: 4px;
}
.gp legend {
  margin-left: -1px;
  padding: 0 4px 0 0;
  font-size: 12px;
  line-height: 14px;
  color: #222;
  white-space: nowrap;
}
.gp-cols {
  width: 177px;
  padding: 0 6px 9px;
}
.gp-cols legend {
  margin-left: 0;
}
.col-count {
  height: 19px;
  margin-top: 2px;
  display: flex;
  align-items: center;
  gap: 1px;
}
.col-list {
  height: 225px;
  padding: 2px 0 0 4px;
  background: #fff;
  border: 1px solid #9a9a9a;
}
.col-list li {
  height: 17px;
  display: flex;
  align-items: center;
  white-space: nowrap;
  color: #222;
}
.censor {
  height: 20px;
  margin: 6px 0 0 7px;
  display: flex;
  align-items: flex-start;
}
.censor label {
  width: 57px;
  line-height: 16px;
  white-space: nowrap;
}
.censor-in {
  width: 100px;
  height: 20px;
  margin: 0 1px 0 0;
  padding: 0;
  border: 1px solid #8a8a8a;
  background: #fff;
}
.censor .rbtn {
  margin-top: 6px;
}
.gp-ci {
  width: 123px;
  margin: 4px 0 0 8px;
  padding: 7px 8px 12px;
}
.wald {
  width: 58px;
  height: 22px;
  display: flex;
  align-items: center;
  justify-content: space-between;
  padding: 0 5px;
  background: #e6e6e6;
  border: 1px solid #adadad;
}
.wald em {
  font-size: 10px;
  color: #555;
}
.gp-roles {
  padding: 6px 6px 11px 9px;
}
.gp-roles legend {
  margin-left: -2px;
}
.role {
  display: flex;
  align-items: flex-start;
  gap: 3px;
  margin-bottom: 5px;
}
.role button,
.gp-ops button {
  flex: none;
  width: 62px;
  height: 21px;
  padding: 0;
  font: inherit;
  color: #111;
  background: #dcdcdc;
  border: 1px solid #8a8a8a;
  border-top-color: #8a8a8a;
  white-space: nowrap;
}
.role-box {
  width: 140px;
  height: 21px;
  padding: 0 5px;
  background: #fff;
  border: 1px solid #aaa;
  line-height: 19px;
  color: #9a9a9a;
  font-style: italic;
}
.role-box.tall {
  height: 72px;
}
.req {
  color: #222;
}
.r-tall {
  margin-bottom: 3px;
}
.r-tall button {
  margin-top: 2px;
}
.r-last {
  margin: -2px 0 0;
}
.r-last button {
  margin-top: 2px;
}
.gp-ops {
  padding: 7px 8px 11px;
}
.gp-ops button {
  display: block;
  width: 60px;
  margin-bottom: 4px;
}
.gp-ops .op-gap {
  margin-top: 28px;
}
.dlg-status {
  display: flex;
  align-items: center;
  position: relative;
  padding-left: 409px;
}
.st-sep {
  width: 1px;
  height: 22px;
  background: #b3b9c6;
  margin-right: 4px;
}
.st-box {
  width: 14px;
  height: 14px;
  margin-left: 10px;
  background: #fff;
  border: 1px solid #555;
}
.dlg-status .caret {
  margin-left: 5px;
}

/* ------ data table ------ */
.sheet-tools {
  height: 26px;
  padding-left: 3px;
  border-bottom: 0;
}
.sheet-main {
  flex: 1;
  min-height: 0;
  display: flex;
  border-top: 4px solid #7f7f7f;
  background: #fff;
}
.sheet-side {
  width: 165px;
  flex: none;
  border-right: 2px solid #b0b0b0;
  display: flex;
  flex-direction: column;
  background: #fff;
}
.side-head {
  height: 18px;
  flex: none;
  margin-top: 2px;
  display: flex;
  align-items: center;
  gap: 2px;
  padding-left: 2px;
  background: #f0f0f0;
  border-top: 1px solid #aaa;
  border-bottom: 1px solid #aaa;
  position: relative;
}
.disc-r2 {
  position: absolute;
  right: 3px;
  top: 3px;
  border-left: 6px solid #808080;
  border-top: 5px solid transparent;
  border-bottom: 5px solid transparent;
}
.colset {
  position: absolute;
  right: 1px;
  top: 1px;
}
.side-scripts {
  height: 43px;
  flex: none;
}
.side-scripts li {
  height: 15px;
  padding-left: 22px;
  line-height: 15px;
  position: relative;
  top: 1px;
}
.play {
  position: absolute;
  left: 6px;
  top: 1px;
  border-left: 8px solid #4e9a56;
  border-top: 6px solid transparent;
  border-bottom: 6px solid transparent;
}
.side-div {
  height: 7px;
  flex: none;
  background: #b9b9b9;
  border-top: 2px solid #fff;
  border-bottom: 2px solid #fff;
}
.side-search {
  height: 22px;
  flex: none;
  padding: 6px 0 0 2px;
  border-bottom: 2px solid #111;
}
.side-cols {
  flex: none;
  height: 165px;
  overflow: hidden;
  display: flex;
  position: relative;
}
.side-cols ul {
  flex: 1;
  overflow: hidden;
  padding-left: 3px;
}
.side-cols li {
  height: 16px;
  display: flex;
  align-items: center;
  white-space: nowrap;
  color: #222;
}
.side-scroll {
  width: 18px;
  flex: none;
  display: flex;
  flex-direction: column;
  background: #f0f0f0;
  text-align: center;
  font-size: 9px;
  color: #999;
  line-height: 16px;
}
.side-scroll i {
  height: 105px;
  background: #cdcdcd;
}
.side-scroll .dn {
  margin-top: auto;
}
.side-rows {
  padding: 0 4px 0 4px;
}
.side-rows div {
  height: 15px;
  display: flex;
  justify-content: space-between;
  line-height: 15px;
}
.sheet-data {
  flex: 1;
  min-width: 0;
  display: flex;
  flex-direction: column;
}
.data-top {
  flex: none;
  height: 377px;
  display: flex;
}
.data-clip {
  flex: none;
  width: 583px;
  overflow: hidden;
}
.data {
  border-collapse: separate;
  border-spacing: 0;
  table-layout: fixed;
  width: 583px;
}
.c0 {
  width: 94px;
}
.c1 {
  width: 80px;
}
.c2 {
  width: 54px;
}
.c3 {
  width: 53px;
}
.c4 {
  width: 115px;
}
.c5 {
  width: 56px;
}
.c6 {
  width: 75px;
}
.c7 {
  width: 56px;
}
.data th {
  height: 39px;
  padding: 0 1px 1px;
  vertical-align: bottom;
  text-align: center;
  font-weight: 700;
  line-height: 17px;
  background: #f7f7f7;
  border-right: 1px solid #d6d6e2;
  border-bottom: 1px solid #777;
  white-space: nowrap;
}
.data .cut {
  overflow: hidden;
  text-align: left;
  padding-left: 3px;
}
.corner {
  position: relative;
  background: linear-gradient(to top right, transparent calc(50% - 1px), #b5b5b5 50%, transparent calc(50% + 1px)) !important;
}
.corner .rbtn {
  position: absolute;
}
.cr1 {
  right: 3px;
  top: 3px;
}
.cr2 {
  left: 6px;
  bottom: 2px;
}
.cr3 {
  position: absolute;
  right: 8px;
  top: 17px;
}
.sigma {
  position: absolute;
  left: 24px;
  bottom: 3px;
  font-size: 11px;
  color: #444;
}
.disc-l2 {
  position: absolute;
  left: 5px;
  top: 4px;
  border-right: 6px solid #808080;
  border-top: 6px solid transparent;
  border-bottom: 6px solid transparent;
}
.data td {
  height: 19px;
  padding: 0 5px 0 0;
  text-align: right;
  line-height: 18px;
  background: #fff;
  border-right: 1px solid #d6d6e2;
  border-bottom: 1px solid #d6d6e2;
  color: #222;
  white-space: nowrap;
}
.data .l {
  text-align: left;
  padding-left: 4px;
}
.data td:first-child {
  background: #f7f7f7;
  border-bottom-color: #a8a8a8;
}
.v-scroll {
  width: 18px;
  flex: none;
  display: flex;
  flex-direction: column;
  padding-top: 39px;
  background: #f5f5f5;
  text-align: center;
  font-size: 9px;
  color: #999;
  line-height: 16px;
}
.v-scroll i {
  height: 30px;
  background: #cdcdcd;
}
.v-scroll .dn {
  margin-top: auto;
}
.h-scroll {
  margin-left: 94px;
  height: 17px;
  width: 507px;
  display: flex;
  align-items: center;
  background: #f5f5f5;
  color: #999;
}
.hs-l {
  width: 16px;
  text-align: center;
}
.h-scroll i {
  width: 192px;
  height: 17px;
  background: #c9c9c9;
}
.hs-r {
  margin-left: auto;
  width: 36px;
  text-align: center;
}
.thumbs {
  height: 37px;
  flex: none;
  margin: 1px 8px 0 2px;
  padding: 7px 0 0 8px;
  display: flex;
  gap: 8px;
  overflow: hidden;
  background: #b5bedc;
  border: 1px solid #e8ecf5;
  border-bottom: 0;
}
.thumb {
  width: 50px;
  height: 40px;
  flex: none;
  background: #fff;
  border: 1px solid #8a94b8;
}

/* ------ input method bar ------ */
.ime {
  position: absolute;
  left: 1648px;
  top: 931px;
  width: 221px;
  height: 30px;
  display: flex;
  align-items: center;
  padding-left: 8px;
  gap: 8px;
  background: #fff;
  border-radius: 7px;
  box-shadow: 0 1px 4px rgba(0, 0, 0, 0.2);
  font-family: "Noto Sans", "Noto Sans CJK SC", sans-serif;
  color: #222;
}
.ime-s {
  width: 20px;
  font: italic 900 21px/24px "Liberation Sans", sans-serif;
  color: #f56a10;
  text-align: center;
}
.ime-sep {
  width: 1px;
  height: 19px;
  background: #ddd;
}
.ime-i {
  width: 18px;
  text-align: center;
  font-size: 16px;
}
.ime-zh {
  margin-left: 1px;
}
.ime-svg {
  width: 18px;
  height: 18px;
  margin: 0 3px;
  flex: none;
}
.ime-ai {
  font-size: 18px;
  margin-left: 2px;
}
```
